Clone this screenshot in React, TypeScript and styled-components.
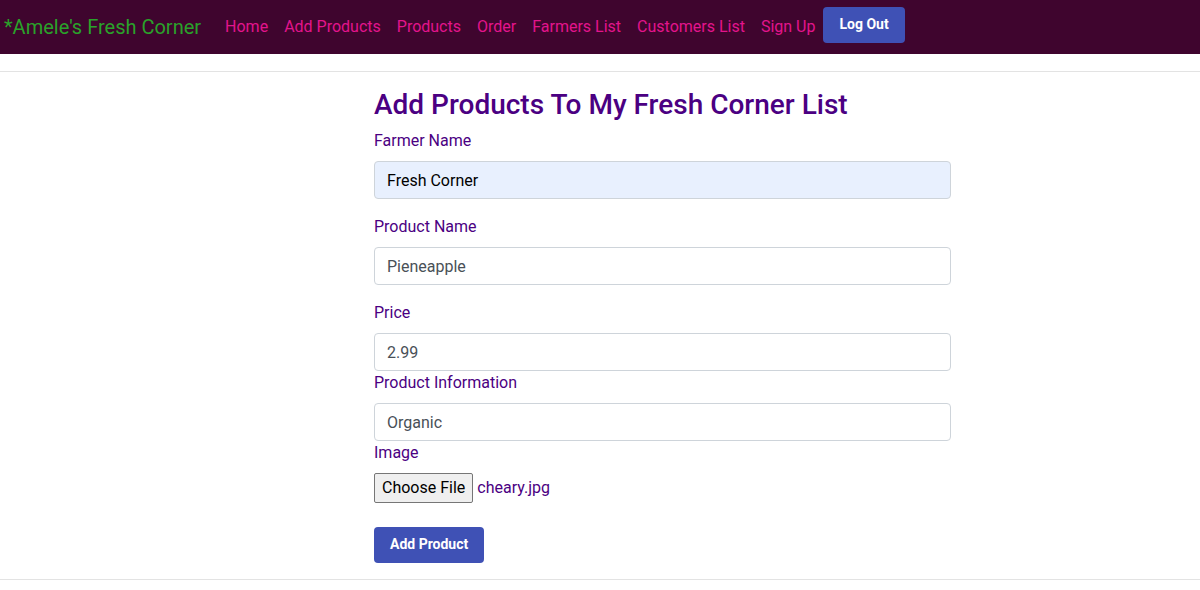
import React from "react";
import styled, { createGlobalStyle } from "styled-components";

const GlobalStyle = createGlobalStyle`
  html, body { margin: 0; padding: 0; background: #fff; }
  body { font-family: Roboto, "Liberation Sans", Arial, sans-serif; font-size: 16px; line-height: 1.5; color: #212529; }
  * { box-sizing: border-box; }
`;

const NavBar = styled.nav`
  height: 54px;
  background: #3f052e;
  display: flex;
  align-items: center;
  padding: 0 4px;
`;

const Brand = styled.a`
  font-size: 20px;
  line-height: 30px;
  color: #2aa22a;
  margin-right: 16px;
  text-decoration: none;
`;

const NavList = styled.div`
  display: flex;
  align-items: center;
`;

const NavLink = styled.a`
  font-size: 16px;
  line-height: 24px;
  color: #e3148c;
  padding: 8px;
  text-decoration: none;
`;

const Button = styled.button`
  background: #3f51b5;
  color: #fff;
  border: none;
  border-radius: 4px;
  font-family: Roboto, "Liberation Sans", Arial, sans-serif;
  font-weight: 700;
  font-size: 14px;
  height: 36px;
  padding: 0 16px 2px;
  cursor: pointer;
`;

const LogOutButton = styled(Button)`
  margin-top: -4px;
`;

const Divider = styled.hr`
  margin: 0;
  border: 0;
  border-top: 1px solid #e3e3e3;
`;

const Spacer = styled.div<{ $h: number }>`
  height: ${(p) => p.$h}px;
`;

const Main = styled.main`
  width: 577px;
  margin: 0 0 0 374px;
  padding: 16px 0 16px;
`;

const Title = styled.h2`
  margin: 0 0 7px;
  font-size: 28px;
  font-weight: 500;
  line-height: 34px;
  color: #4b0082;
`;

const Group = styled.div<{ $mb: number }>`
  margin-bottom: ${(p) => p.$mb}px;
`;

const Label = styled.label`
  display: block;
  color: #4b0082;
  font-size: 16px;
  line-height: 24px;
  margin-bottom: 8px;
`;

const Input = styled.input<{ $autofill?: boolean }>`
  display: block;
  width: 100%;
  height: 38px;
  padding: 6px 12px;
  font-family: Roboto, "Liberation Sans", Arial, sans-serif;
  font-size: 16px;
  line-height: 24px;
  color: ${(p) => (p.$autofill ? "#000" : "#495057")};
  background: ${(p) => (p.$autofill ? "#e8f0fe" : "#fff")};
  border: 1px solid #ced4da;
  border-radius: 4px;
  outline: none;
`;

const FileRow = styled.div`
  display: flex;
  align-items: center;
  gap: 4px;
  margin-bottom: 24px;
`;

const FileButton = styled.span`
  display: inline-flex;
  align-items: center;
  height: 30px;
  padding: 0 7px;
  background: #efefef;
  border: 1px solid #767676;
  border-radius: 2px;
  font-size: 16px;
  color: #000;
`;

const FileName = styled.span`
  color: #4b0082;
  font-size: 16px;
`;

export default function App() {
  const links = ["Home", "Add Products", "Products", "Order", "Farmers List", "Customers List", "Sign Up"];
  return (
    <>
      <GlobalStyle />
      <NavBar>
        <Brand>*Amele's Fresh Corner</Brand>
        <NavList>
          {links.map((l) => (
            <NavLink key={l}>{l}</NavLink>
          ))}
          <LogOutButton>Log Out</LogOutButton>
        </NavList>
      </NavBar>
      <Spacer $h={17} />
      <Divider />
      <Main>
        <Title>Add Products To My Fresh Corner List</Title>
        <Group $mb={16}>
          <Label>Farmer Name</Label>
          <Input $autofill defaultValue="Fresh Corner" />
        </Group>
        <Group $mb={16}>
          <Label>Product Name</Label>
          <Input defaultValue="Pieneapple" />
        </Group>
        <Group $mb={0}>
          <Label>Price</Label>
          <Input defaultValue="2.99" />
        </Group>
        <Group $mb={0}>
          <Label>Product Information</Label>
          <Input defaultValue="Organic" />
        </Group>
        <Label>Image</Label>
        <FileRow>
          <FileButton>Choose File</FileButton>
          <FileName>cheary.jpg</FileName>
        </FileRow>
        <Button>Add Product</Button>
      </Main>
      <Divider />
    </>
  );
}
